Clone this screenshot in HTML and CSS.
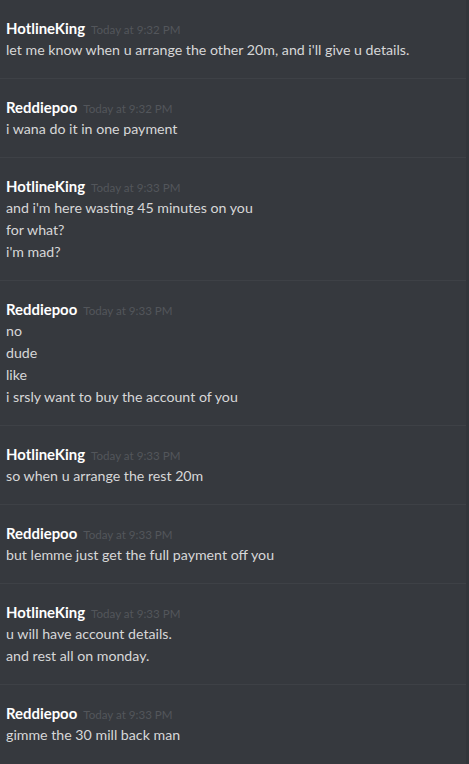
FILE: index.html
```html
<!DOCTYPE html>
<html lang="en">
  <head>
    <meta charset="UTF-8" />
    <meta name="viewport" content="width=device-width, initial-scale=1.0" />
    <title>Chat</title>
    <link rel="stylesheet" href="styles.css">
  </head>
  <body>
    <div class="chat">
      <div class="group">
        <div class="header">
          <span class="name">HotlineKing</span>
          <span class="time">Today at 9:32 PM</span>
        </div>
        <div class="line">let me know when u arrange the other 20m, and i'll give u details.</div>
      </div>

      <div class="group">
        <div class="header">
          <span class="name">Reddiepoo</span>
          <span class="time">Today at 9:32 PM</span>
        </div>
        <div class="line">i wana do it in one payment</div>
      </div>

      <div class="group">
        <div class="header">
          <span class="name">HotlineKing</span>
          <span class="time">Today at 9:33 PM</span>
        </div>
        <div class="line">and i'm here wasting 45 minutes on you</div>
        <div class="line">for what?</div>
        <div class="line">i'm mad?</div>
      </div>

      <div class="group">
        <div class="header">
          <span class="name">Reddiepoo</span>
          <span class="time">Today at 9:33 PM</span>
        </div>
        <div class="line">no</div>
        <div class="line">dude</div>
        <div class="line">like</div>
        <div class="line">i srsly want to buy the account of you</div>
      </div>

      <div class="group">
        <div class="header">
          <span class="name">HotlineKing</span>
          <span class="time">Today at 9:33 PM</span>
        </div>
        <div class="line">so when u arrange the rest 20m</div>
      </div>

      <div class="group">
        <div class="header">
          <span class="name">Reddiepoo</span>
          <span class="time">Today at 9:33 PM</span>
        </div>
        <div class="line">but lemme just get the full payment off you</div>
      </div>

      <div class="group">
        <div class="header">
          <span class="name">HotlineKing</span>
          <span class="time">Today at 9:33 PM</span>
        </div>
        <div class="line">u will have account details.</div>
        <div class="line">and rest all on monday.</div>
      </div>

      <div class="group">
        <div class="header">
          <span class="name">Reddiepoo</span>
          <span class="time">Today at 9:33 PM</span>
        </div>
        <div class="line">gimme the 30 mill back man</div>
      </div>
    </div>
  </body>
</html>
```

FILE: styles.css
```css
* {
  margin: 0;
  padding: 0;
  box-sizing: border-box;
}

html,
body {
  background: #36393e;
  height: 100%;
}

body {
  font-family: Lato, "Open Sans", sans-serif;
  color: #d6d7d8;
  overflow: hidden;
}

.chat {
  display: flex;
  flex-direction: column;
  border-right: 3px solid #32353a;
  min-height: 100%;
}

.group {
  padding: 17px 0 17px 6px;
  border-bottom: 1px solid #3e4146;
}

.group:last-child {
  border-bottom: none;
}

.header {
  display: flex;
  align-items: baseline;
  gap: 6px;
  height: 22px;
  line-height: 22px;
  overflow: hidden;
}

.name {
  color: #ffffff;
  font-size: 14.9px;
  font-weight: 700;
}

.time {
  color: #53565b;
  font-size: 11.6px;
}

.line {
  font-size: 14.2px;
  line-height: 22px;
}
```
